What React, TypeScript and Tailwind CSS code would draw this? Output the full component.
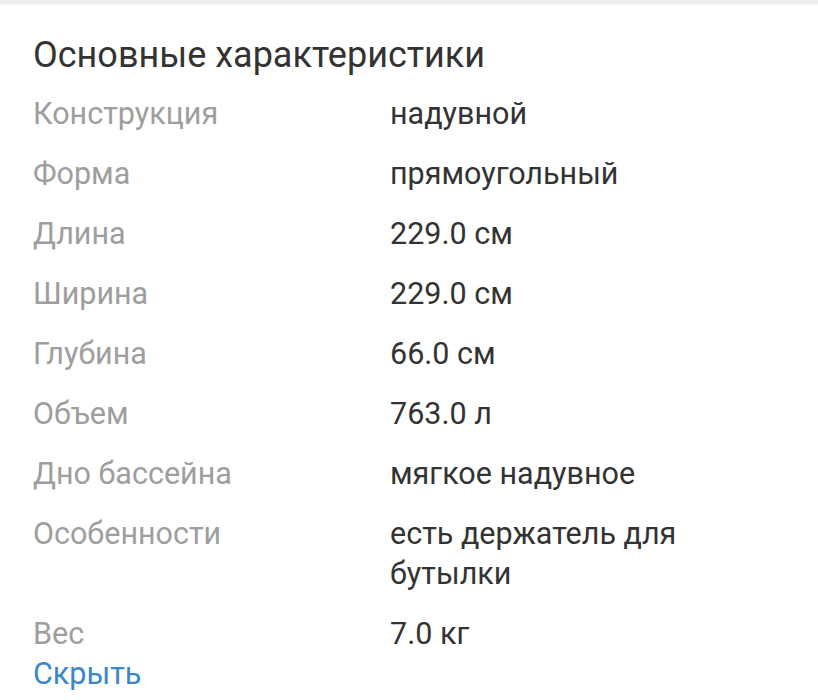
import React from "react";

const rows: [string, string][] = [
  ["Конструкция", "надувной"],
  ["Форма", "прямоугольный"],
  ["Длина", "229.0 см"],
  ["Ширина", "229.0 см"],
  ["Глубина", "66.0 см"],
  ["Объем", "763.0 л"],
  ["Дно бассейна", "мягкое надувное"],
  ["Особенности", "есть держатель для бутылки"],
  ["Вес", "7.0 кг"],
];

export default function App() {
  return (
    <div className="w-[818px] h-[700px] bg-white overflow-hidden" style={{ fontFamily: "Roboto, 'Noto Sans', sans-serif" }}>
      <div className="h-[4px] bg-[#efefef]" />
      <div className="h-[1px] bg-[#f6f6f6]" />
      <div className="pl-[33px] pr-[20px] pt-[30px]">
        <h2 className="text-[36px] leading-[40px] text-[#333333] mb-[19px]">Основные характеристики</h2>
        <div className="flex flex-col gap-[20px]">
          {rows.map(([k, v]) => (
            <div key={k} className="flex text-[30.5px] leading-[40px]">
              <div className="w-[357px] shrink-0 text-[#9e9e9e]">{k}</div>
              <div className="w-[320px] text-[#333333]">{v}</div>
            </div>
          ))}
        </div>
        <div className="text-[30.5px] leading-[40px] text-[#3b87c9]">Скрыть</div>
      </div>
    </div>
  );
}
